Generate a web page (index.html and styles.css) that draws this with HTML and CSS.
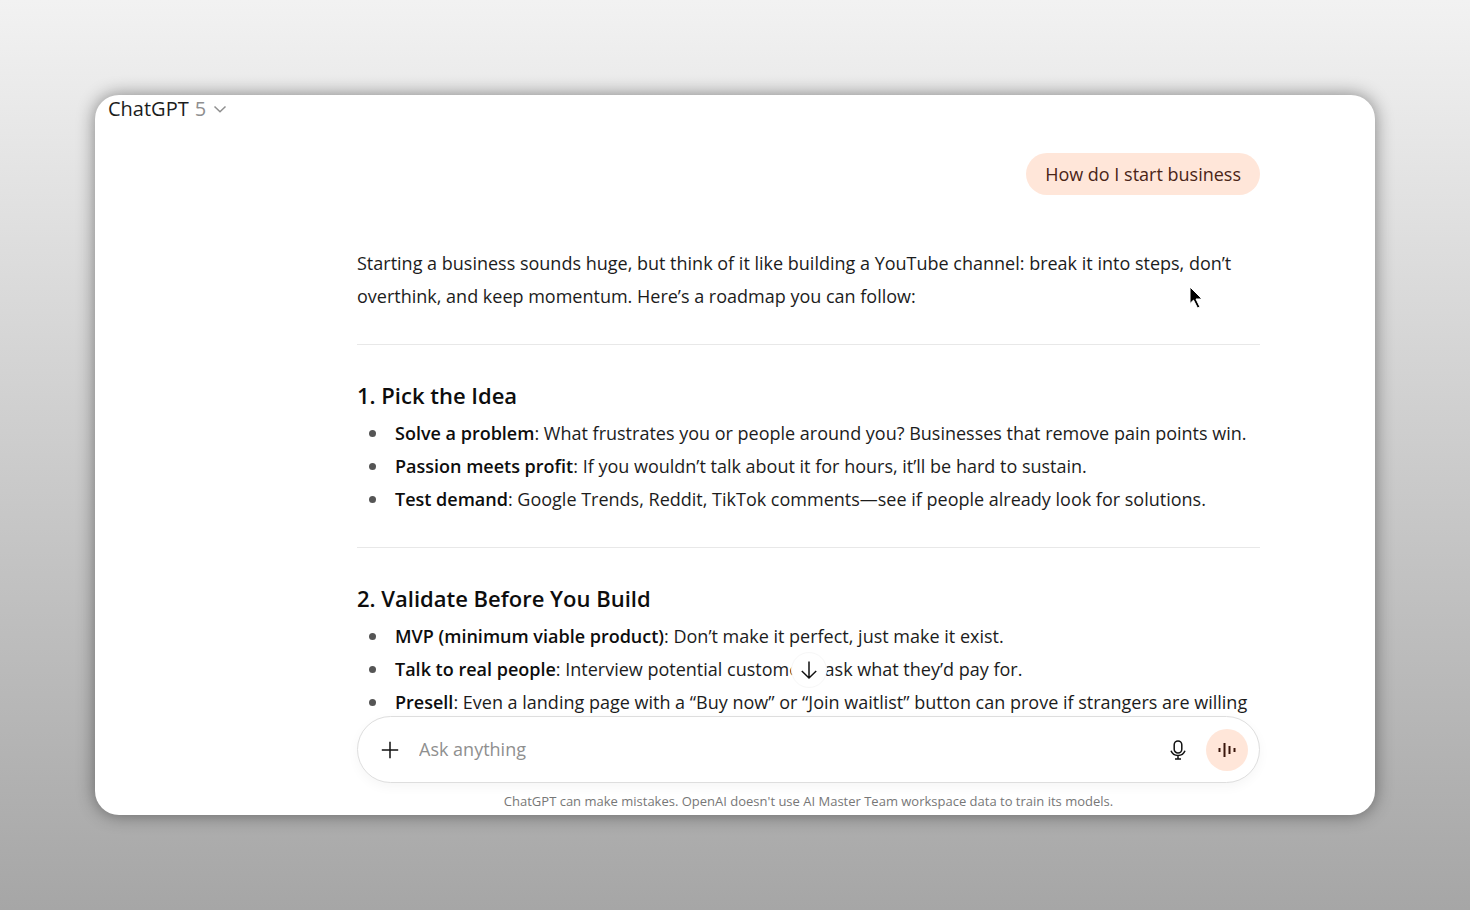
FILE: index.html
```html
<!DOCTYPE html>
<html lang="en">
<head>
  <meta charset="UTF-8" />
  <meta name="viewport" content="width=device-width, initial-scale=1.0"/>
  <title>ChatGPT</title>
  <link rel="stylesheet" href="styles.css">
</head>
<body>
  <div class="window">
    <header class="topbar">
      <button class="model" type="button">
        <span>ChatGPT</span>
        <span class="version">5</span>
        <svg width="16" height="14" viewBox="0 0 16 14"><path d="M2.500 4.500 8 9.800l5.500-5.300"/></svg>
      </button>
    </header>

    <!-- CONVERSATION -->
    <main class="thread">
      <div class="column">
        <div class="bubble">How do I start business</div>

        <article class="answer">
          <p>Starting a business sounds huge, but think of it like building a YouTube channel: break it into steps, don’t overthink, and keep momentum. Here’s a roadmap you can follow:</p>
          <hr>
          <h3>1. Pick the Idea</h3>
          <ul>
            <li><strong>Solve a problem</strong>: What frustrates you or people around you? Businesses that remove pain points win.</li>
            <li><strong>Passion meets profit</strong>: If you wouldn’t talk about it for hours, it’ll be hard to sustain.</li>
            <li><strong>Test demand</strong>: Google Trends, Reddit, TikTok comments—see if people already look for solutions.</li>
          </ul>
          <hr>
          <h3>2. Validate Before You Build</h3>
          <ul>
            <li><strong>MVP (minimum viable product)</strong>: Don’t make it perfect, just make it exist.</li>
            <li><strong>Talk to real people</strong>: Interview potential customers, ask what they’d pay for.</li>
            <li><strong>Presell</strong>: Even a landing page with a “Buy now” or “Join waitlist” button can prove if strangers are willing</li>
          </ul>
        </article>
      </div>
    </main>

    <!-- COMPOSER -->
    <footer class="bottom">
      <div class="column">
        <button class="scroll-down" type="button" aria-label="Scroll to bottom">
          <svg width="20" height="20" viewBox="0 0 20 20"><path d="M10 1.500v16.500M2.800 11l7.200 7 7.200-7"/></svg>
        </button>
        <form class="composer">
          <button class="icon-btn" type="button" aria-label="Add files">
            <svg width="18" height="18" viewBox="0 0 18 18"><path d="M9 .8v16.400M.8 9h16.400"/></svg>
          </button>
          <input class="prompt" type="text" placeholder="Ask anything" aria-label="Ask anything">
          <button class="icon-btn" type="button" aria-label="Dictate">
            <svg width="18" height="20" viewBox="0 0 18 20"><rect x="5.200" y="1" width="7.600" height="12" rx="3.800"/><path d="M2 10.800c1.200 3 3.700 4.700 7 4.700s5.800-1.700 7-4.700M9 15.500V19M6 19h6"/></svg>
          </button>
          <button class="voice" type="button" aria-label="Voice mode">
            <svg width="18" height="18" viewBox="0 0 18 18"><path d="M1.500 7v4M6.500 2v14M11.500 5v8M16.500 7v4"/></svg>
          </button>
        </form>
        <p class="note">ChatGPT can make mistakes. OpenAI doesn't use AI Master Team workspace data to train its models.</p>
      </div>
    </footer>

    <svg class="cursor" width="14" height="23" viewBox="0 0 14 23"><path d="M1 1v16.500l3.500-3.400 4 8 2.400-1.200-3.900-7.900H13z"/></svg>
  </div>
</body>
</html>
```

FILE: styles.css
```css
* {
  box-sizing: border-box;
}

body {
  margin: 0;
  height: 100vh;
  padding: 95px;
  font-family: 'Segoe UI', 'Open Sans', sans-serif;
  font-size: 18px;
  line-height: 33px;
  color: #1c1c1c;
  background: linear-gradient(#f2f2f2, #a6a6a6);
}

button, input {
  font: inherit;
  color: inherit;
  background: none;
  border: none;
  padding: 0;
}

button {
  cursor: pointer;
}

svg {
  display: block;
  fill: none;
  stroke: #111;
  stroke-width: 1.5;
}

.window {
  position: relative;
  display: flex;
  flex-direction: column;
  height: 100%;
  overflow: hidden;
  background: #fff;
  border-radius: 24px;
  box-shadow: 0 0 18px rgba(0, 0, 0, 0.45);
}

.topbar {
  padding: 0 13px;
}

.model {
  display: flex;
  align-items: center;
  gap: 6px;
  font-size: 20px;
  line-height: 28px;
}

.version {
  color: #8f8f8f;
}

.model svg {
  stroke: #8f8f8f;
}

/* CONVERSATION */
.thread {
  flex: 1;
  min-height: 0;
  overflow: hidden;
  padding: 30px 0 0 147px;
}

.column {
  position: relative;
  max-width: 903px;
  margin: 0 auto;
}

.bubble {
  width: fit-content;
  margin: 0 0 52px auto;
  padding: 5px 19px 4px;
  border-radius: 21px;
  background: #ffe6d9;
  color: #4a2417;
}

.answer p,
.answer h3,
.answer ul {
  margin: 0;
}

.answer hr {
  margin: 31px 0 34px;
  border: none;
  border-top: 1px solid #e8e8e8;
}

.answer h3 {
  margin-bottom: 5px;
  font-size: 22px;
  font-weight: 600;
  color: #0d0d0d;
}

.answer ul {
  padding: 0;
  list-style: none;
}

.answer li {
  position: relative;
  padding-left: 38px;
}

.answer li::before {
  content: "";
  position: absolute;
  left: 12px;
  top: 13px;
  width: 7px;
  height: 7px;
  border-radius: 50%;
  background: #555;
}

.answer strong {
  font-weight: 600;
  color: #0d0d0d;
}

/* COMPOSER */
.bottom {
  padding-left: 147px;
}

.composer {
  display: flex;
  align-items: center;
  height: 67px;
  padding: 0 11px 0 23px;
  background: #fff;
  border: 1px solid #dedede;
  border-radius: 34px;
  box-shadow: 0 4px 12px rgba(0, 0, 0, 0.04);
}

.prompt {
  flex: 1;
  min-width: 0;
  margin: 0 20px;
  outline: none;
}

.prompt::placeholder {
  color: #8f8f8f;
  opacity: 1;
}

.voice {
  display: flex;
  align-items: center;
  justify-content: center;
  width: 42px;
  height: 42px;
  margin-left: 19px;
  border-radius: 50%;
  background: #ffe6d9;
}

.voice svg {
  stroke: #3a160c;
  stroke-width: 2;
}

.scroll-down {
  position: absolute;
  left: 50%;
  top: -64px;
  display: flex;
  align-items: center;
  justify-content: center;
  width: 36px;
  height: 36px;
  margin-left: -18px;
  border-radius: 50%;
  background: #fff;
  border: 1px solid #f7f7f7;
}

.note {
  margin: 0;
  padding: 8px 0 3px;
  font-size: 13px;
  line-height: 21px;
  text-align: center;
  color: #777;
}

.cursor {
  position: absolute;
  left: 1094px;
  top: 191px;
}

.cursor path {
  fill: #000;
  stroke: #fff;
  stroke-width: 1;
}
```
